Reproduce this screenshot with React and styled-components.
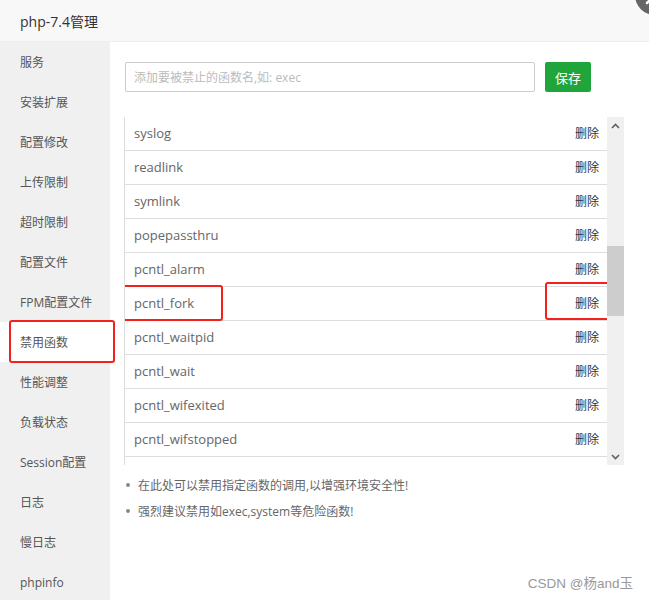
import React from 'react'
import styled, { createGlobalStyle } from 'styled-components'

const Global = createGlobalStyle`
  html, body {
    margin: 0;
    padding: 0;
    background: #fff;
    overflow: hidden;
  }
  body {
    font-family: "Open Sans", "Noto Sans CJK SC", sans-serif;
  }
`

const Dialog = styled.div`
  position: relative;
  width: 649px;
  height: 600px;
  display: flex;
  flex-direction: column;
  overflow: hidden;
  background: #fff;
`

const Header = styled.div`
  height: 41px;
  flex: none;
  display: flex;
  align-items: center;
  padding-left: 20px;
  background: #f8f8f8;
  border-bottom: 1px solid #eee;
  font-size: 14px;
  color: #333;
`

const Close = styled.svg`
  position: absolute;
  top: -35px;
  right: -36px;
`

const Body = styled.div`
  flex: 1;
  display: flex;
`

const Side = styled.ul`
  width: 110px;
  flex: none;
  margin: 0;
  padding: 0;
  list-style: none;
  background: #f0f0f0;
`

const SideItem = styled.li`
  position: relative;
  height: 40px;
  display: flex;
  align-items: center;
  padding-left: 20px;
  font-size: 12px;
  color: #555;
  background: ${p => (p.active ? '#fff' : 'transparent')};
`

const Mark = styled.span`
  position: absolute;
  border: 2.5px solid #f3201e;
  border-radius: 3px;
  pointer-events: none;
  z-index: 2;
`

const Main = styled.div`
  flex: 1;
  padding: 20px 25px 0 14px;
`

const Form = styled.div`
  display: flex;
  align-items: center;
  gap: 10px;
  padding-left: 1px;
`

const Input = styled.input`
  width: 410px;
  height: 30px;
  box-sizing: border-box;
  border: 1px solid #ccc;
  border-radius: 2px;
  padding: 0 8px;
  font-family: inherit;
  font-size: 12px;
  outline: none;
  &::placeholder {
    color: #bbb;
  }
`

const SaveButton = styled.button`
  width: 46px;
  height: 30px;
  border: none;
  border-radius: 2px;
  background: #20a53a;
  color: #fff;
  font-family: inherit;
  font-size: 13px;
  padding: 0;
`

const TableWrap = styled.div`
  margin-top: 25px;
  height: 348px;
  display: flex;
`

const Viewport = styled.div`
  flex: 1;
  border-left: 1px solid #ddd;
  overflow: hidden;
`

const Row = styled.div`
  position: relative;
  height: 34px;
  box-sizing: border-box;
  border-bottom: 1px solid #ddd;
  display: flex;
  align-items: center;
  justify-content: space-between;
  padding: 0 8px 1px 9px;
`

const Name = styled.span`
  font-size: 13px;
  color: #666;
`

const Del = styled.span`
  font-size: 12px;
  color: #333;
`

const Scrollbar = styled.div`
  width: 17px;
  flex: none;
  background: #f0f0f0;
  display: flex;
  flex-direction: column;
  align-items: center;
`

const Arrow = styled.div`
  height: 17px;
  width: 17px;
  flex: none;
  display: flex;
  align-items: center;
  justify-content: center;
`

const Track = styled.div`
  flex: 1;
  width: 17px;
  position: relative;
`

const Thumb = styled.div`
  position: absolute;
  left: 0;
  right: 0;
  top: 112px;
  height: 70px;
  background: #cdcdcd;
`

const Notes = styled.ul`
  margin: 7px 0 0;
  padding: 0 0 0 2px;
  list-style: none;
`

const Note = styled.li`
  display: flex;
  align-items: center;
  height: 26px;
  font-size: 12px;
  color: #666;
  &::before {
    content: '';
    width: 4px;
    height: 4px;
    border-radius: 50%;
    background: #888;
    margin-right: 8px;
  }
`

const Watermark = styled.div`
  position: absolute;
  right: 16px;
  bottom: 8px;
  font-family: "Liberation Sans", "Noto Sans CJK SC", sans-serif;
  font-size: 13.5px;
  color: #999;
`

const menu = [
  '服务', '安装扩展', '配置修改', '上传限制', '超时限制', '配置文件',
  'FPM配置文件', '禁用函数', '性能调整', '负载状态', 'Session配置', '日志',
  '慢日志', 'phpinfo'
]

const funcs = [
  'syslog', 'readlink', 'symlink', 'popepassthru', 'pcntl_alarm', 'pcntl_fork',
  'pcntl_waitpid', 'pcntl_wait', 'pcntl_wifexited', 'pcntl_wifstopped', ''
]

export default function App () {
  return (
    <Dialog>
      <Global />
      <Header>php-7.4管理</Header>
      <Close width='60' height='60' viewBox='0 0 60 60'>
        <circle cx='30' cy='30' r='20' fill='#666' />
        <path d='M22 22 L38 38 M38 22 L22 38' stroke='#fff' strokeWidth='2.5' strokeLinecap='round' />
      </Close>
      <Body>
        <Side>
          {menu.map(m => (
            <SideItem key={m} active={m === '禁用函数'}>
              {m}
              {m === '禁用函数' && <Mark style={{ left: 9, top: -2, width: 102, height: 39 }} />}
            </SideItem>
          ))}
        </Side>
        <Main>
          <Form>
            <Input placeholder='添加要被禁止的函数名,如: exec' />
            <SaveButton>保存</SaveButton>
          </Form>
          <TableWrap>
            <Viewport>
              {funcs.map((f, i) => (
                <Row key={i}>
                  <Name>{f}</Name>
                  {f && <Del>删除</Del>}
                  {f === 'pcntl_fork' && (
                    <>
                      <Mark style={{ left: -4, top: -2, width: 98, height: 32 }} />
                      <Mark style={{ left: 420, top: -5, width: 62, height: 34 }} />
                    </>
                  )}
                </Row>
              ))}
            </Viewport>
            <Scrollbar>
              <Arrow>
                <svg width='9' height='6' viewBox='0 0 9 6'>
                  <path d='M1 5 L4.5 1.5 L8 5' stroke='#606060' strokeWidth='1.6' fill='none' />
                </svg>
              </Arrow>
              <Track><Thumb /></Track>
              <Arrow>
                <svg width='9' height='6' viewBox='0 0 9 6'>
                  <path d='M1 1 L4.5 4.5 L8 1' stroke='#606060' strokeWidth='1.6' fill='none' />
                </svg>
              </Arrow>
            </Scrollbar>
          </TableWrap>
          <Notes>
            <Note>在此处可以禁用指定函数的调用,以增强环境安全性!</Note>
            <Note>强烈建议禁用如exec,system等危险函数!</Note>
          </Notes>
        </Main>
      </Body>
      <Watermark>CSDN @杨and玉</Watermark>
    </Dialog>
  )
}
